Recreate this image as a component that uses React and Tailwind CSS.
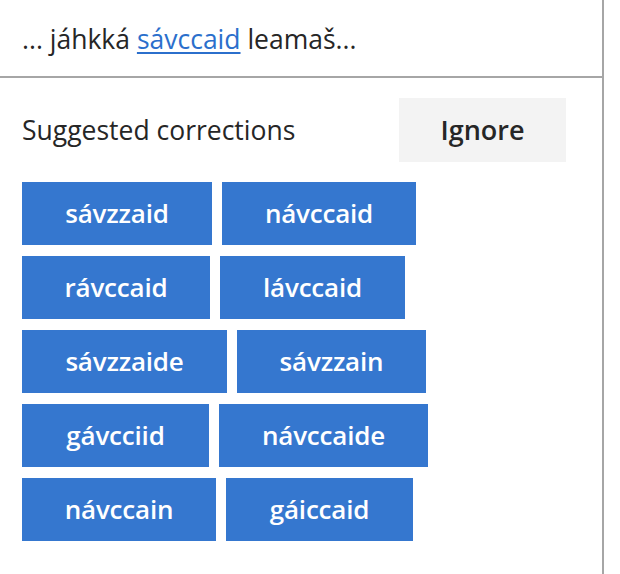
import React from "react";

const suggestions = [
  { text: "sávzzaid", w: "w-[190px]" },
  { text: "návccaid", w: "w-[194px]" },
  { text: "rávccaid", w: "w-[188px]" },
  { text: "lávccaid", w: "w-[185px]" },
  { text: "sávzzaide", w: "w-[205px]" },
  { text: "sávzzain", w: "w-[189px]" },
  { text: "gávcciid", w: "w-[187px]" },
  { text: "návccaide", w: "w-[209px]" },
  { text: "návccain", w: "w-[194px]" },
  { text: "gáiccaid", w: "w-[187px]" },
];

export default function App() {
  return (
    <div className="w-[620px] h-[574px] bg-white font-['Open_Sans',sans-serif] text-[#262626]">
      <div className="w-[604px] h-full border-r-2 border-[#a6a6a6]">
        <div className="h-[78px] flex items-center pl-[22px] pt-[3px] border-b-2 border-[#a6a6a6] text-[26.5px]">
          <span>
            ... jáhkká{" "}
            <a href="#" className="text-[#2b6fcc] underline underline-offset-[3px]">sávccaid</a>{" "}
            leamaš...
          </span>
        </div>
        <div className="pl-[22px] pt-[20px]">
          <div className="flex items-center w-[544px] justify-between">
            <span className="text-[26.5px] pt-[2px]">Suggested corrections</span>
            <button className="w-[167px] h-[64px] bg-[#f3f3f3] text-[27px] font-semibold">Ignore</button>
          </div>
          <div className="flex flex-wrap gap-x-[10px] gap-y-[11px] w-[420px] mt-[20px]">
            {suggestions.map((s) => (
              <button
                key={s.text}
                className={`${s.w} h-[63px] bg-[#3577cf] text-white text-[26px] font-semibold tracking-[-0.2px]`}
              >
                {s.text}
              </button>
            ))}
          </div>
        </div>
      </div>
    </div>
  );
}
